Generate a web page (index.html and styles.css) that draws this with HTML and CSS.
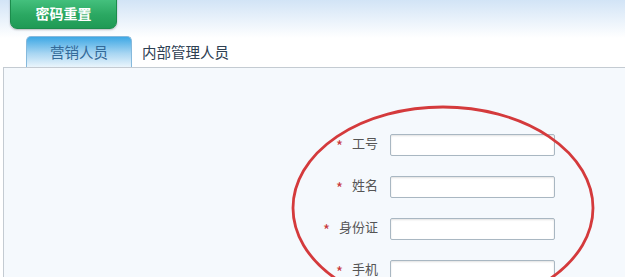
FILE: index.html
```html
<!DOCTYPE html>
<html lang="zh-CN">
  <head>
    <meta charset="UTF-8" />
    <title>密码重置</title>
    <link rel="stylesheet" href="styles.css">
  </head>
  <body>
    <div class="top">
      <span class="reset-btn">密码重置</span>
    </div>
    <div class="tabs">
      <span class="tab active">营销人员</span>
      <span class="tab">内部管理人员</span>
    </div>
    <div class="panel">
      <form class="form">
        <label class="label"><i>*</i>工号</label>
        <input class="field" type="text" />
        <label class="label"><i>*</i>姓名</label>
        <input class="field" type="text" />
        <label class="label"><i>*</i>身份证</label>
        <input class="field" type="text" />
        <label class="label"><i>*</i>手机</label>
        <input class="field" type="text" />
      </form>
    </div>
    <svg class="mark" width="625" height="277" viewBox="0 0 625 277">
      <ellipse cx="443" cy="208" rx="150" ry="101" fill="none" stroke="#d43a3c" stroke-width="2.8" />
    </svg>
  </body>
</html>
```

FILE: styles.css
```css
body {
  margin: 0;
  font-family: "Noto Sans CJK SC", "Liberation Sans", sans-serif;
  background: #fff linear-gradient(#d2e4f6, #fff 38px) no-repeat;
  overflow: hidden;
}
.top {
  height: 36px;
  padding-left: 10px;
}
.reset-btn {
  display: inline-block;
  width: 105px;
  height: 33px;
  margin-top: -6px;
  line-height: 37px;
  text-align: center;
  color: #fff;
  font-size: 14px;
  font-weight: bold;
  background: linear-gradient(#4cc886, #2ba862 60%, #1f9a55);
  border: 1px solid #1c8c4c;
  border-radius: 0 0 7px 7px;
  box-shadow: 0 1px 2px rgba(0, 0, 0, 0.25);
}
.tabs {
  display: flex;
  align-items: flex-end;
  height: 31px;
  padding-left: 26px;
}
.tab {
  height: 30px;
  line-height: 30px;
  padding: 0 10px;
  font-size: 14.5px;
  color: #2e4052;
}
.tab.active {
  width: 84px;
  padding: 0 10px;
  text-align: center;
  color: #336a99;
  background: linear-gradient(#3ea8e5, #a9d6f2 55%, #eaf5fc);
  border: 1px solid #86b9dc;
  border-bottom: none;
  border-radius: 5px 5px 0 0;
}
.panel {
  margin-left: 3px;
  height: 220px;
  background: #f5f9fd;
  border-top: 1px solid #c4cbd2;
  border-left: 1px solid #c4cbd2;
}
.form {
  display: grid;
  grid-template-columns: 100px 165px;
  column-gap: 12px;
  row-gap: 19px;
  align-items: center;
  margin: 0;
  padding: 65px 0 0 274px;
}
.label {
  text-align: right;
  font-size: 13px;
  color: #555;
}
.label i {
  font-style: normal;
  font-size: 15px;
  color: #c8373a;
  margin-right: 9px;
  vertical-align: -4px;
}
.field {
  box-sizing: border-box;
  width: 165px;
  height: 22px;
  margin: 0;
  background: #fff;
  border: 1px solid #a9b7c2;
  border-radius: 2px;
  box-shadow: inset 0 1px 2px rgba(0, 0, 0, 0.12);
}
.mark {
  position: absolute;
  left: 0;
  top: 0;
  pointer-events: none;
}
```
